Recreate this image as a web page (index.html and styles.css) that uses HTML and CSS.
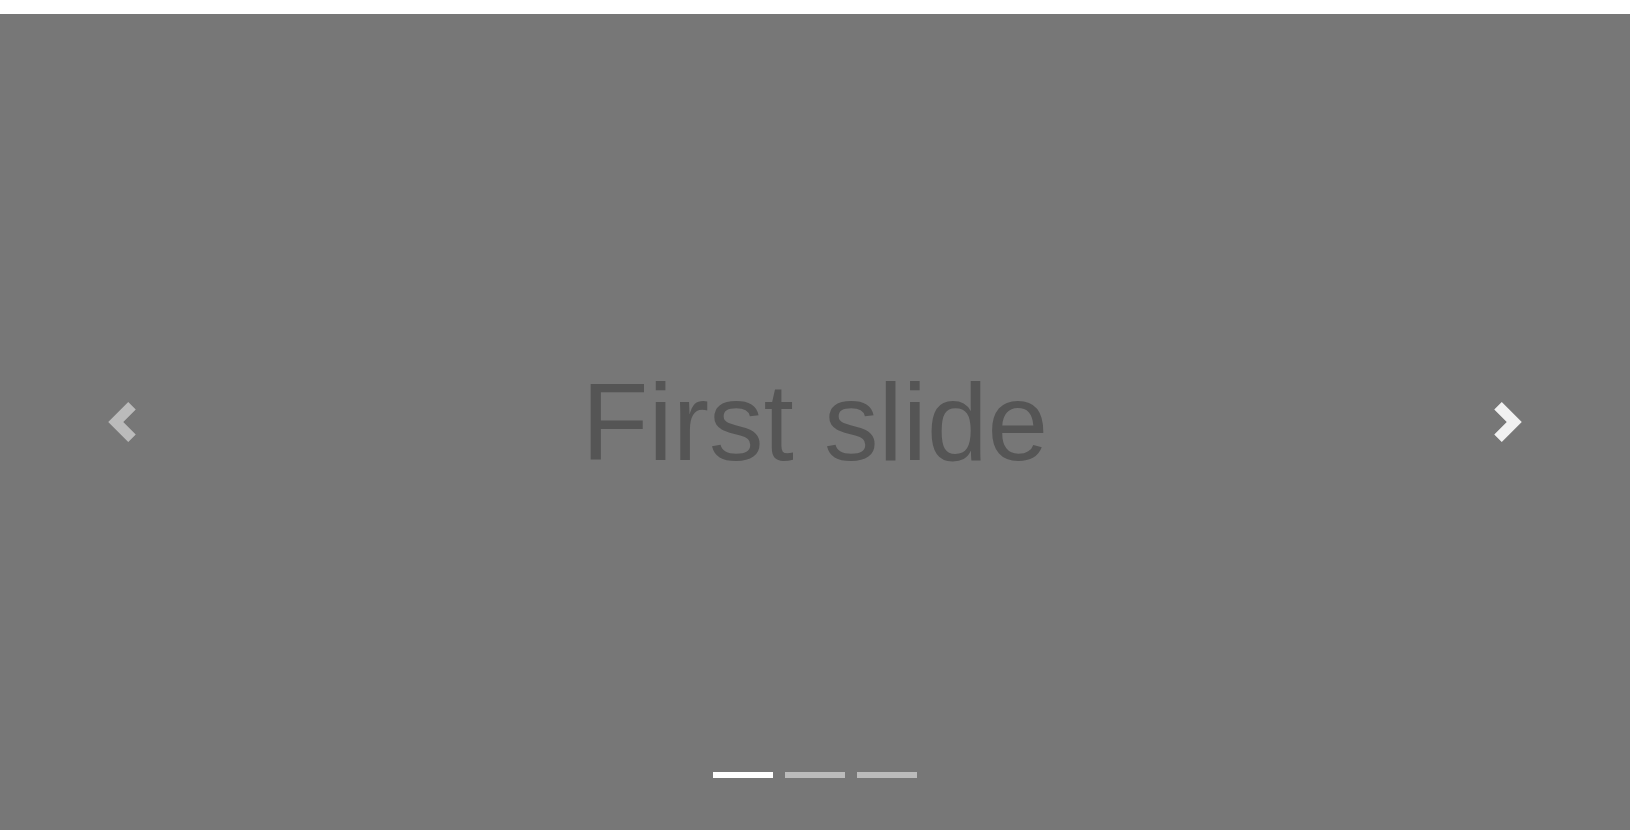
FILE: index.html
```html
<!DOCTYPE html>
<html lang="en">
<head>
<meta charset="utf-8">
<title>Carousel</title>
<link rel="stylesheet" href="styles.css">
</head>
<body>
<div class="carousel">
  <div class="slide">
    <span class="slide-label">First slide</span>
  </div>
  <ol class="indicators">
    <li class="indicator active"></li>
    <li class="indicator"></li>
    <li class="indicator"></li>
  </ol>
  <a class="control control-prev" href="#">
    <svg class="control-icon" viewBox="0 0 8 8" width="40" height="40"><path fill="#fff" d="M5.25 0l-4 4 4 4 1.5-1.5L4.25 4l2.5-2.5L5.25 0z"/></svg>
  </a>
  <a class="control control-next hover" href="#">
    <svg class="control-icon" viewBox="0 0 8 8" width="40" height="40"><path fill="#fff" d="M2.75 0l-1.5 1.5L3.75 4l-2.5 2.5L2.75 8l4-4-4-4z"/></svg>
  </a>
</div>
</body>
</html>
```
FILE: styles.css
```css
html, body {
  margin: 0;
  padding: 0;
  background: #fff;
  overflow: hidden;
}
body {
  height: 830px;
  box-sizing: border-box;
  padding-top: 14px;
  font-family: "Liberation Sans", Arial, sans-serif;
}
.carousel {
  position: relative;
  width: 1630px;
  height: 816px;
  background: #777;
}
.slide {
  height: 100%;
  display: flex;
  align-items: center;
  justify-content: center;
}
.slide-label {
  font-size: 109px;
  line-height: 1;
  color: #555;
}
.indicators {
  position: absolute;
  left: 0;
  right: 0;
  bottom: 0;
  margin: 0 0 32px;
  padding: 0;
  list-style: none;
  display: flex;
  justify-content: center;
}
.indicator {
  width: 60px;
  height: 6px;
  margin: 0 6px;
  border-top: 20px solid transparent;
  border-bottom: 20px solid transparent;
  background-clip: padding-box;
  background-color: #fff;
  opacity: 0.5;
}
.indicator.active {
  opacity: 1;
}
.control {
  position: absolute;
  top: 0;
  bottom: 0;
  width: 15%;
  display: flex;
  align-items: center;
  justify-content: center;
  opacity: 0.5;
}
.control.hover {
  opacity: 0.9;
}
.control-prev { left: 0; }
.control-next { right: 0; }
.control-icon {
  display: block;
  width: 40px;
  height: 40px;
}
```
